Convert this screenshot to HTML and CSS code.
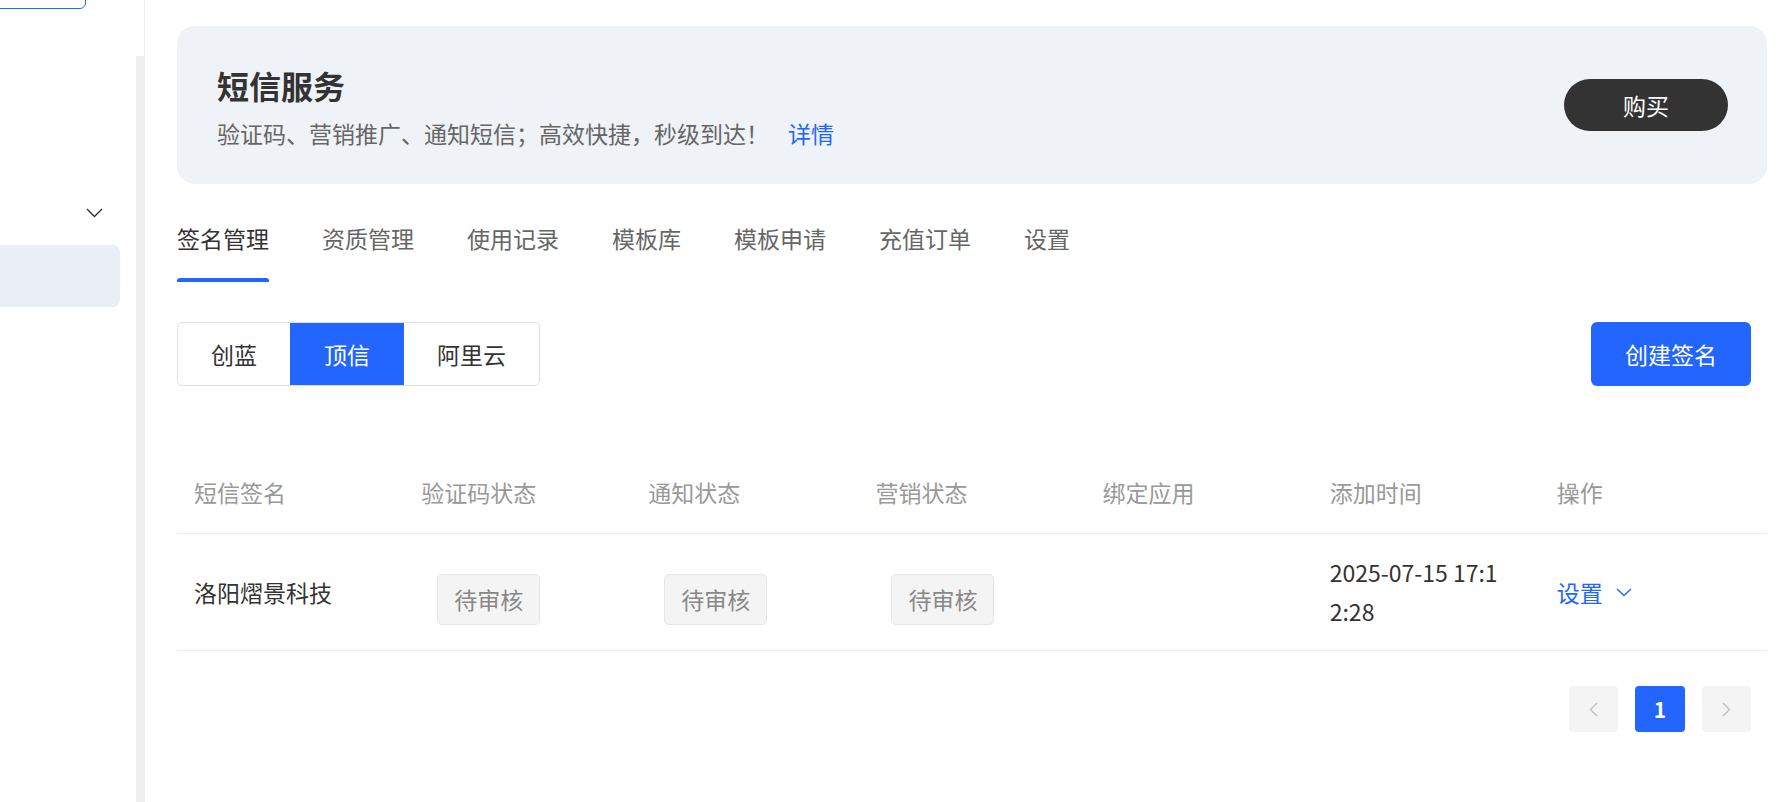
FILE: index.html
```html
<!DOCTYPE html>
<html lang="zh-CN">

<head>
    <meta charset="UTF-8">
    <meta name="viewport" content="width=device-width, initial-scale=1.0">
    <title>短信服务</title>
    <link rel="stylesheet" href="styles.css">
</head>

<body>
    <div class="layout">
        <!-- 左侧菜单 -->
        <aside class="sidebar">
            <div class="side-menu">
                <div class="side-top"></div>
                <div class="side-group">
                    <svg width="17" height="10" viewBox="0 0 17 10"><path d="M1 1l7.5 7.5L16 1" fill="none" stroke="#333" stroke-width="1.4"/></svg>
                </div>
                <div class="side-item active"></div>
            </div>
            <div class="side-track"></div>
        </aside>

        <main class="main">
            <div class="banner">
                <div class="banner-text">
                    <h1>短信服务</h1>
                    <p>验证码、营销推广、通知短信；高效快捷，秒级到达！<a class="link">详情</a></p>
                </div>
                <button class="btn-buy">购买</button>
            </div>

            <div class="tabs">
                <span class="tab active">签名管理</span>
                <span class="tab">资质管理</span>
                <span class="tab">使用记录</span>
                <span class="tab">模板库</span>
                <span class="tab">模板申请</span>
                <span class="tab">充值订单</span>
                <span class="tab">设置</span>
            </div>

            <div class="toolbar">
                <div class="segment">
                    <span class="seg-item">创蓝</span>
                    <span class="seg-item active">顶信</span>
                    <span class="seg-item">阿里云</span>
                </div>
                <button class="btn-primary">创建签名</button>
            </div>

            <div class="table">
                <div class="tr thead">
                    <div class="td">短信签名</div>
                    <div class="td">验证码状态</div>
                    <div class="td">通知状态</div>
                    <div class="td">营销状态</div>
                    <div class="td">绑定应用</div>
                    <div class="td">添加时间</div>
                    <div class="td">操作</div>
                </div>
                <div class="tr">
                    <div class="td">洛阳熠景科技</div>
                    <div class="td"><span class="tag">待审核</span></div>
                    <div class="td"><span class="tag">待审核</span></div>
                    <div class="td"><span class="tag">待审核</span></div>
                    <div class="td"></div>
                    <div class="td"><span class="time">2025-07-15 17:12:28</span></div>
                    <div class="td">
                        <a class="link op">设置
                            <svg width="16" height="9" viewBox="0 0 16 9"><path d="M1 1l7 6.5L15 1" fill="none" stroke="#2266ff" stroke-width="1.4"/></svg>
                        </a>
                    </div>
                </div>
            </div>

            <div class="pager">
                <span class="page-btn">
                    <svg width="9" height="15" viewBox="0 0 9 15"><path d="M8 1L1.5 7.5 8 14" fill="none" stroke="#c0c4cc" stroke-width="1.5"/></svg>
                </span>
                <span class="page-btn current">1</span>
                <span class="page-btn">
                    <svg width="9" height="15" viewBox="0 0 9 15"><path d="M1 1l6.5 6.5L1 14" fill="none" stroke="#c0c4cc" stroke-width="1.5"/></svg>
                </span>
            </div>
        </main>
    </div>
</body>

</html>
```

FILE: styles.css
```css
* {
    padding: 0;
    margin: 0;
    box-sizing: border-box;
}

body {
    font-family: "Noto Sans CJK SC", "Noto Sans", sans-serif;
    font-size: 23px;
    color: #333;
    background: #fff;
}

.layout {
    display: flex;
    height: 802px;
    overflow: hidden;
}

/* 侧边栏 */
.sidebar {
    width: 145px;
    display: flex;
    border-right: 1px solid #eee;
}

.side-menu {
    width: 136px;
}

.side-top {
    width: 100px;
    height: 40px;
    margin: -31px 0 0 -14px;
    border: 1px solid #2266ff;
    border-radius: 6px;
}

.side-group {
    display: flex;
    justify-content: flex-end;
    align-items: center;
    height: 26px;
    margin-top: 191px;
    padding-right: 33px;
}

.side-item {
    height: 62px;
    margin-top: 19px;
}

.side-item.active {
    width: 120px;
    background: #eaeef5;
    border-radius: 0 7px 7px 0;
}

.side-track {
    width: 8px;
    margin-top: 56px;
    background: #f0f0f0;
}

/* 主区域 */
.main {
    flex: 1;
    padding: 26px 18px 0 32px;
}

.banner {
    display: flex;
    justify-content: space-between;
    height: 158px;
    padding: 37px 39px 0 40px;
    background: #eff2f7;
    border-radius: 18px;
}

.banner h1 {
    font-size: 32px;
    line-height: 44px;
    font-weight: bold;
    color: #333;
}

.banner p {
    line-height: 52px;
    color: #666;
}

.link {
    color: #2266ff;
    cursor: pointer;
}

.banner .link {
    margin-left: 19px;
}

.btn-buy {
    align-self: center;
    margin-top: -37px;
    width: 164px;
    height: 52px;
    border: none;
    border-radius: 26px;
    background: #333;
    color: #fff;
    font-family: inherit;
    font-size: 23px;
}

.tabs {
    display: flex;
    gap: 53px;
    margin-top: 38px;
}

.tab {
    line-height: 32px;
    padding-bottom: 24px;
    color: #666;
}

.tab.active {
    color: #333;
}

.tab.active::after {
    content: "";
    display: block;
    height: 4px;
    margin-top: 24px;
    margin-bottom: -28px;
    background: #2266ff;
    border-radius: 3px 3px 0 0;
}

.toolbar {
    display: flex;
    justify-content: space-between;
    margin-top: 44px;
    padding-right: 16px;
}

.segment {
    display: flex;
    border: 1px solid #dcdfe6;
    border-radius: 5px;
    overflow: hidden;
}

.seg-item {
    height: 62px;
    line-height: 62px;
    padding: 0 33px;
    color: #333;
}

.seg-item.active {
    background: #2266ff;
    color: #fff;
}

.seg-item + .seg-item {
    border-left: 1px solid #dcdfe6;
}

.seg-item.active,
.seg-item.active + .seg-item {
    border-left-color: #2266ff;
}

.btn-primary {
    width: 160px;
    height: 64px;
    border: none;
    border-radius: 6px;
    background: #2266ff;
    color: #fff;
    font-family: inherit;
    font-size: 23px;
}

/* 表格 */
.table {
    margin-top: 68px;
}

.tr {
    display: grid;
    grid-template-columns: repeat(7, 1fr);
    align-items: center;
    min-height: 117px;
    border-bottom: 1px solid #ebeef5;
}

.thead {
    min-height: 0;
    color: #999;
}

.td {
    padding: 0 17px;
    line-height: 32px;
}

.thead .td {
    padding-top: 22px;
    padding-bottom: 25px;
}

.tag {
    display: inline-block;
    margin: 15px 0 0 16px;
    padding: 0 16px;
    line-height: 49px;
    color: #888;
    background: #f4f4f5;
    border: 1px solid #e6e6e9;
    border-radius: 5px;
}

.time {
    display: block;
    width: 186px;
    line-height: 39px;
    word-break: break-all;
}

.op {
    display: flex;
    align-items: center;
    gap: 13px;
}

.pager {
    display: flex;
    justify-content: flex-end;
    gap: 17px;
    margin-top: 35px;
    padding-right: 16px;
}

.page-btn {
    display: flex;
    align-items: center;
    justify-content: center;
    width: 49px;
    height: 46px;
    background: #f4f4f5;
    border-radius: 4px;
}

.page-btn.current {
    width: 50px;
    background: #2266ff;
    color: #fff;
    font-weight: bold;
    font-size: 21px;
}
```
